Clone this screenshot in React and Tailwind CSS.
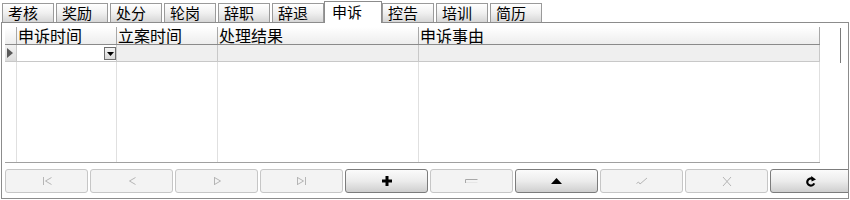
import React from "react";

const tabs = ["考核", "奖励", "处分", "轮岗", "辞职", "辞退", "申诉", "控告", "培训", "简历"];
const SEL = 6;

const G = "#b5b5b5";

function Icon({ kind }) {
  switch (kind) {
    case "first":
      return (
        <svg width="12" height="10" viewBox="0 0 12 10">
          <path d="M2.5 1v8" stroke={G} strokeWidth="1" />
          <path d="M10.5 1.5 L4.5 5 L10.5 8.5" stroke={G} strokeWidth="1" fill="none" />
        </svg>
      );
    case "prior":
      return (
        <svg width="12" height="10" viewBox="0 0 12 10">
          <path d="M9.5 1.5 L3.5 5 L9.5 8.5" stroke={G} strokeWidth="1" fill="none" />
        </svg>
      );
    case "next":
      return (
        <svg width="12" height="10" viewBox="0 0 12 10">
          <path d="M3.5 1 L3.5 9 M3.5 1.5 L9.5 5 L3.5 8.5" stroke={G} strokeWidth="1" fill="none" />
        </svg>
      );
    case "last":
      return (
        <svg width="12" height="10" viewBox="0 0 12 10">
          <path d="M1.5 1 L1.5 9 M1.5 1.5 L7.5 5 L1.5 8.5 M9.5 1v8" stroke={G} strokeWidth="1" fill="none" />
        </svg>
      );
    case "insert":
      return (
        <svg width="10" height="10" viewBox="0 0 10 10">
          <path d="M3.5 0h3v3.5H10v3H6.5V10h-3V6.5H0v-3h3.5z" fill="#000" />
        </svg>
      );
    case "delete":
      return (
        <svg width="13" height="6" viewBox="0 0 13 6">
          <path d="M0.5 1.5 H12.5 M0.5 1.5 V5" stroke="#a8a8a8" strokeWidth="1" fill="none" />
          <path d="M1 4.5 H12.5" stroke="#e6e6e6" strokeWidth="1" />
        </svg>
      );
    case "edit":
      return (
        <svg width="11" height="6" viewBox="0 0 11 6">
          <path d="M0 6 L5.5 0 L11 6z" fill="#000" />
        </svg>
      );
    case "post":
      return (
        <svg width="12" height="9" viewBox="0 0 12 9">
          <path d="M0.5 6.5 L2.5 5 L4 7 L11 1" stroke={G} strokeWidth="1" fill="none" />
        </svg>
      );
    case "cancel":
      return (
        <svg width="10" height="11" viewBox="0 0 10 11">
          <path d="M1 1 L9 10 M9 1 L1 10" stroke={G} strokeWidth="1" fill="none" />
        </svg>
      );
    case "refresh":
      return (
        <svg width="11" height="11" viewBox="0 0 11 11">
          <path d="M8.2 7.4 A3.6 3.6 0 1 1 6.2 2.6" stroke="#000" strokeWidth="2.2" fill="none" />
          <path d="M5.2 0 L10 3.6 L5.6 5.6z" fill="#000" />
        </svg>
      );
    default:
      return null;
  }
}

const buttons = [
  { k: "first", on: false },
  { k: "prior", on: false },
  { k: "next", on: false },
  { k: "last", on: false },
  { k: "insert", on: true },
  { k: "delete", on: false },
  { k: "edit", on: true },
  { k: "post", on: false },
  { k: "cancel", on: false },
  { k: "refresh", on: true },
];

const cols = [
  { t: "", w: "w-[12px]" },
  { t: "申诉时间", w: "w-[100px]" },
  { t: "立案时间", w: "w-[101px]" },
  { t: "处理结果", w: "w-[201px]" },
  { t: "申诉事由", w: "w-[401px]" },
];

export default function App() {
  return (
    <div className="w-[850px] h-[200px] bg-white overflow-hidden font-['Noto_Sans_CJK_SC','Noto_Sans',sans-serif] text-black">
      {/* tabs */}
      <div className="flex items-end h-[22px]">
        {tabs.map((t, i) =>
          i === SEL ? (
            <div
              key={t}
              className="relative z-10 -mb-px h-[22px] w-[58px] bg-white border border-b-0 border-[#8c8c8c] pl-[7px] text-[15px] leading-[19px]"
            >
              {t}
            </div>
          ) : (
            <div
              key={t}
              className={`${i === SEL + 1 ? "ml-0" : "ml-[2px]"} h-[19px] w-[52px] border border-b-0 border-[#9a9a9a] bg-gradient-to-b from-white via-[#f0f0f0] to-[#d6d6d6] pl-[5px] text-[15px] leading-[18px] whitespace-nowrap`}
            >
              {t}
            </div>
          )
        )}
      </div>

      {/* panel */}
      <div className="ml-[1px] w-[848px] h-[177px] border border-[#8c8c8c] overflow-hidden">
        <div className="flex">
          {/* grid */}
          <div className="ml-[3px] mt-[4px] w-[815px] shrink-0">
            {/* header */}
            <div className="flex h-[18px] border-b border-[#8a8a8a] bg-gradient-to-b from-white to-[#ededed]">
              {cols.map((c, i) => (
                <div
                  key={i}
                  className={`${c.w} h-full border-r border-[#a8a8a8] pl-[1px] text-[16px] leading-[17px] whitespace-nowrap`}
                >
                  {c.t}
                </div>
              ))}
            </div>
            {/* row 1 */}
            <div className="flex h-[17px] border-b border-[#c8c8c8] bg-[#efefef]">
              <div className="w-[12px] h-full border-r border-[#c8c8c8] bg-gradient-to-b from-[#f2f2f2] to-[#dcdcdc] flex items-center pl-[2px]">
                <svg width="6" height="10" viewBox="0 0 6 10">
                  <path d="M0 0 L6 5 L0 10z" fill="#5a5a5a" />
                </svg>
              </div>
              <div className="w-[100px] h-full border-r border-[#c8c8c8] bg-white flex items-end justify-end pb-[1px]">
                <div className="w-[12px] h-[13px] border border-[#6e6e6e] bg-gradient-to-b from-[#f4f4f4] to-[#d8d8d8] flex items-center justify-center">
                  <svg width="7" height="4" viewBox="0 0 7 4">
                    <path d="M0 0 H7 L3.5 4z" fill="#000" />
                  </svg>
                </div>
              </div>
              <div className="w-[101px] h-full border-r border-[#c8c8c8]" />
              <div className="w-[201px] h-full border-r border-[#c8c8c8]" />
              <div className="w-[401px] h-full border-r border-[#c8c8c8]" />
            </div>
            {/* body */}
            <div className="flex h-[100px] bg-white">
              {cols.map((c, i) => (
                <div key={i} className={`${c.w} h-full border-r border-[#e0e0e0]`} />
              ))}
            </div>
            <div className="h-px w-[815px] bg-[#a0a0a0]" />
          </div>
          <div className="ml-[20px] mt-[5px] w-px h-[35px] bg-[#7a7a7a]" />
        </div>

        {/* navigator */}
        <div className="flex gap-[2px] ml-[3px] mt-[6px]">
          {buttons.map((b) => (
            <div
              key={b.k}
              className={`w-[83px] h-[24px] shrink-0 rounded-[3px] border flex items-center justify-center ${
                b.on
                  ? "border-[#7c7c7c] bg-gradient-to-b from-[#fbfbfb] via-[#ececec] to-[#cfcfcf]"
                  : "border-[#c6c6c6] bg-[#f3f3f3]"
              }`}
            >
              <Icon kind={b.k} />
            </div>
          ))}
        </div>
      </div>
    </div>
  );
}
